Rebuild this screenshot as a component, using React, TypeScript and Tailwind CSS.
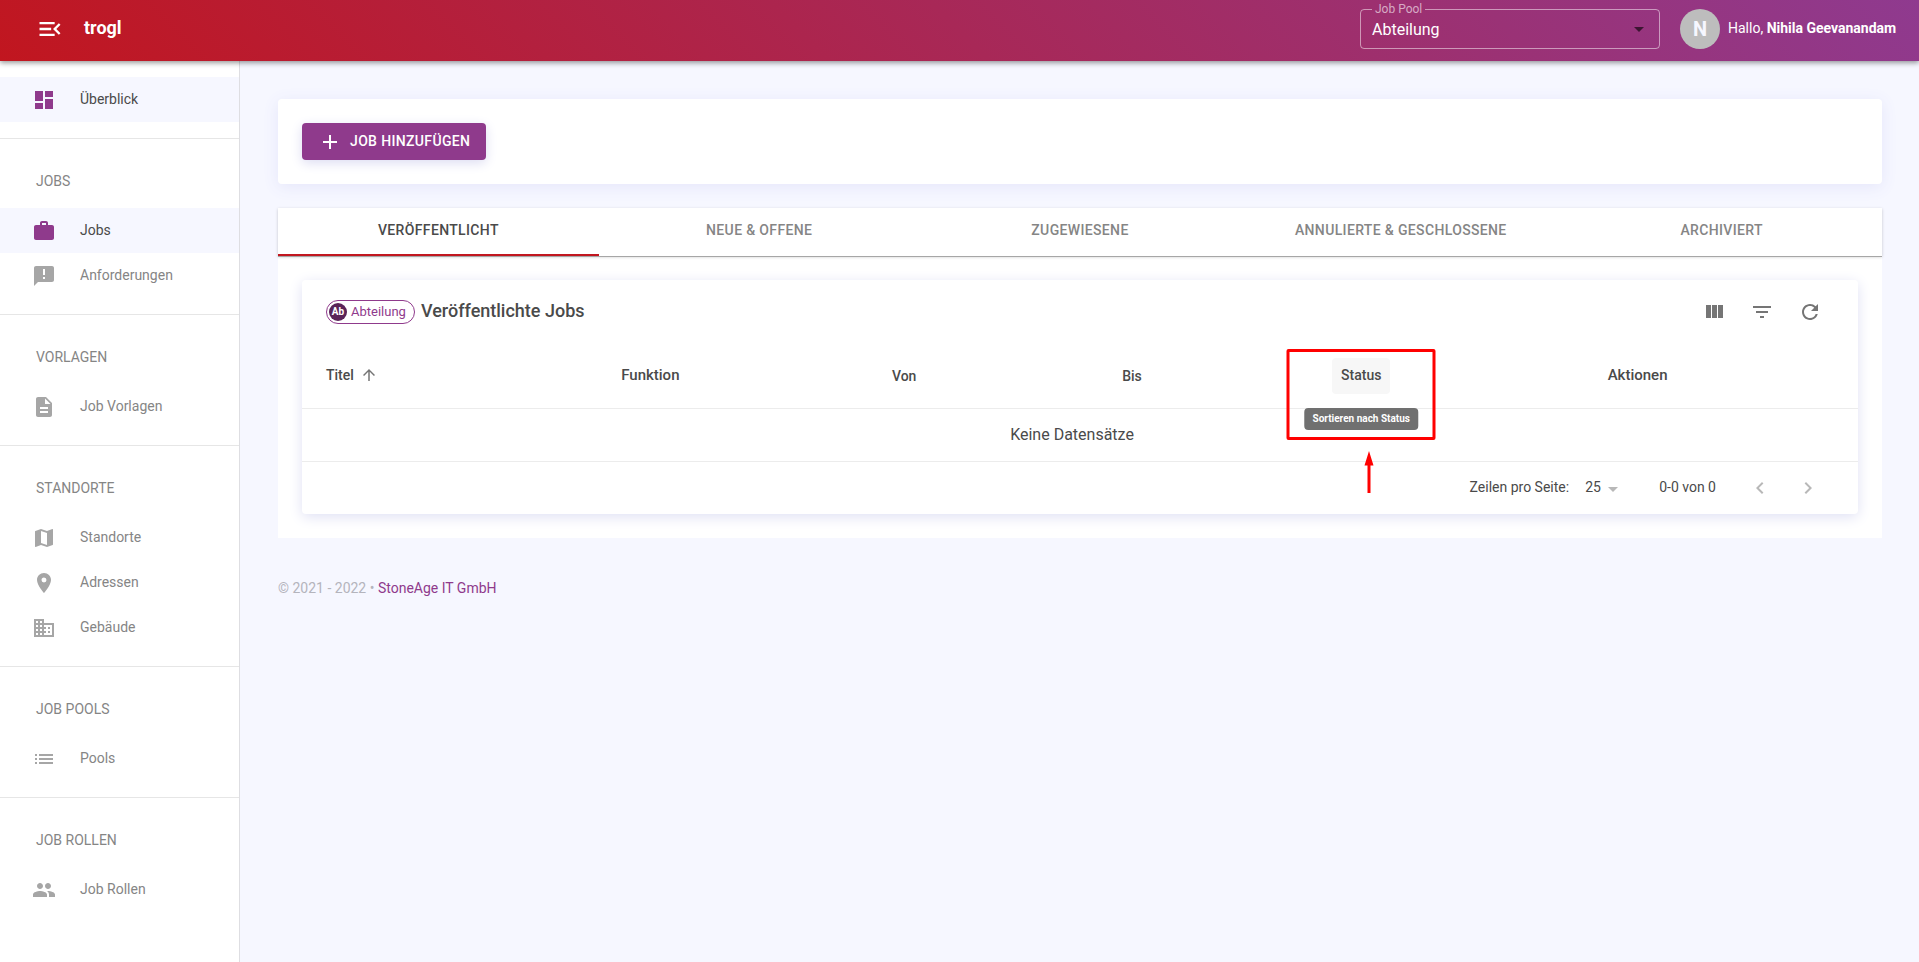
import { ReactNode } from "react";
import { IconType } from "react-icons";
import {
  MdAdd,
  MdAnnouncement,
  MdArrowDropDown,
  MdArrowUpward,
  MdBusiness,
  MdChevronLeft,
  MdChevronRight,
  MdDashboard,
  MdDescription,
  MdFilterList,
  MdList,
  MdMap,
  MdMenuOpen,
  MdPeople,
  MdPlace,
  MdRefresh,
  MdWork,
} from "react-icons/md";

// --- Types ---
interface NavItem {
  label: string;
  icon: IconType;
  active?: boolean;
}

interface NavSection {
  title?: string;
  items: NavItem[];
}

const navSections: NavSection[] = [
  { items: [{ label: "Überblick", icon: MdDashboard, active: true }] },
  {
    title: "JOBS",
    items: [
      { label: "Jobs", icon: MdWork, active: true },
      { label: "Anforderungen", icon: MdAnnouncement },
    ],
  },
  { title: "VORLAGEN", items: [{ label: "Job Vorlagen", icon: MdDescription }] },
  {
    title: "STANDORTE",
    items: [
      { label: "Standorte", icon: MdMap },
      { label: "Adressen", icon: MdPlace },
      { label: "Gebäude", icon: MdBusiness },
    ],
  },
  { title: "JOB POOLS", items: [{ label: "Pools", icon: MdList }] },
  { title: "JOB ROLLEN", items: [{ label: "Job Rollen", icon: MdPeople }] },
];

const tabs = [
  "VERÖFFENTLICHT",
  "NEUE & OFFENE",
  "ZUGEWIESENE",
  "ANNULIERTE & GESCHLOSSENE",
  "ARCHIVIERT",
];

export default function App() {
  return (
    <div className="flex min-h-screen flex-col bg-[#f6f7ff] font-['Roboto',sans-serif] text-sm text-[#4a4a4a]">
      <Header />
      <div className="flex flex-1">
        <Sidebar />
        <main className="min-w-0 flex-1 pt-[38px] pr-[37px] pl-[38px]">
          <div className="rounded bg-white p-6 shadow-[0_3px_16px_0_#e5e6fa]">
            <button className="flex h-[37px] items-center gap-2 rounded bg-[#8f3a8c] px-4 font-medium tracking-wide text-white shadow-[0_3px_12px_0_#dcdcf2]">
              <span className="flex w-6 justify-center">
                <MdAdd className="size-6" />
              </span>
              <span className="pb-0.5">JOB HINZUFÜGEN</span>
            </button>
          </div>

          <section className="mt-6 bg-white">
            <TabBar />
            <div className="p-6">
              <JobsCard />
            </div>
          </section>

          <footer className="mt-10 text-[#b4b4bc]">
            © 2021 - 2022 •{" "}
            <a href="#" className="text-[#8f3a8c]">
              StoneAge IT GmbH
            </a>
          </footer>
        </main>
      </div>
    </div>
  );
}

// --- Header ---
function Header() {
  return (
    <header className="relative z-10 flex h-[61px] items-end justify-between bg-[linear-gradient(45deg,#c1161f,#8f3a8f)] pr-[19px] pl-9 text-white shadow-[0_2px_5px_0_rgba(0,0,0,0.4)]">
      <div className="flex h-full items-center gap-5 pb-1">
        <button aria-label="Menü einklappen">
          <MdMenuOpen className="size-7" />
        </button>
        <span className="pb-0.5 text-lg font-bold">trogl</span>
      </div>

      <div className="flex items-end gap-5 pb-3">
        <fieldset className="relative w-[300px] rounded border border-white/50 px-[11px]">
          <legend className="h-4 px-[3px] text-xs leading-4 text-white/60">
            <label htmlFor="job-pool">Job Pool</label>
          </legend>
          <select
            id="job-pool"
            className="block h-[31px] w-full appearance-none bg-transparent pb-1.5 text-base outline-none"
          >
            <option>Abteilung</option>
          </select>
          <MdArrowDropDown className="pointer-events-none absolute right-2 bottom-[7px] size-6 text-black/60" />
        </fieldset>
        <div className="flex items-center gap-2">
          <span className="flex size-10 items-center justify-center rounded-full bg-[#bdbdbd] text-xl font-bold text-[#f6f7ff]">
            N
          </span>
          <span className="min-w-[172px] pb-0.5">
            Hallo, <b>Nihila Geevanandam</b>
          </span>
        </div>
      </div>
    </header>
  );
}

// --- Sidebar ---
function Sidebar() {
  return (
    <nav className="w-60 shrink-0 border-r border-[#dedee2] bg-white">
      {navSections.map((section, index) => (
        <div
          key={index}
          className="border-b border-[#e6e6e6] py-4 last:border-b-0"
        >
          {section.title && (
            <h2 className="flex h-[53px] items-center pb-0.5 pl-9 text-[#858585]">
              {section.title}
            </h2>
          )}
          <ul>
            {section.items.map((item) => (
              <NavLink key={item.label} item={item} />
            ))}
          </ul>
        </div>
      ))}
    </nav>
  );
}

function NavLink({ item }: { item: NavItem }) {
  const Icon = item.icon;
  return (
    <li>
      <a
        href="#"
        className={`flex h-[45px] items-center gap-6 pl-8 ${
          item.active ? "bg-[#f6f7ff] text-[#4a4a4a]" : "text-[#858585]"
        }`}
      >
        <Icon
          className={`size-6 ${item.active ? "text-[#8f3a8c]" : "text-[#a6a6a6]"}`}
        />
        <span className="pb-0.5">{item.label}</span>
      </a>
    </li>
  );
}

// --- Tabs ---
function TabBar() {
  return (
    <div
      role="tablist"
      className="grid grid-cols-5 shadow-[0_1px_0_0_#a6a6a6,0_1px_3px_0_rgba(0,0,0,0.2)]"
    >
      {tabs.map((tab, index) => (
        <button
          key={tab}
          role="tab"
          aria-selected={index === 0}
          className={`h-12 border-b-2 pb-0.5 font-medium tracking-wide ${
            index === 0
              ? "border-[#c1161f] text-[#4a4a4a]"
              : "border-transparent text-[#858585]"
          }`}
        >
          {tab}
        </button>
      ))}
    </div>
  );
}

// --- Jobs table ---
function JobsCard() {
  return (
    <div className="rounded bg-white shadow-[0_3px_14px_0_#dfe0f4]">
      <div className="flex h-16 items-center justify-between px-6">
        <div className="flex items-center gap-1.5">
          <span className="flex h-6 items-center gap-1 rounded-full border border-[#8f3a8c] pr-2 pl-0.5 text-[13px] text-[#8f3a8c]">
            <span className="flex size-[18px] items-center justify-center rounded-full bg-[#5a2358] text-[10px] font-bold text-white">
              Ab
            </span>
            Abteilung
          </span>
          <h1 className="pb-0.5 text-lg font-medium">Veröffentlichte Jobs</h1>
        </div>
        <div className="flex text-[#757575]">
          <ToolButton label="Spalten">
            <svg viewBox="0 0 24 24" fill="currentColor" className="size-6">
              <path d="M10 18h5V5h-5v13zm-6 0h5V5H4v13zM16 5v13h5V5h-5z" />
            </svg>
          </ToolButton>
          <ToolButton label="Filter">
            <MdFilterList className="size-6" />
          </ToolButton>
          <ToolButton label="Aktualisieren">
            <MdRefresh className="size-6" />
          </ToolButton>
        </div>
      </div>

      <table className="w-full table-fixed border-separate border-spacing-0 text-left">
        <thead>
          <tr className="h-[65px] *:border-b *:border-[#ececec] *:font-medium">
            <th className="w-[20%] pl-6">
              <button className="flex items-center gap-1.5 pb-0.5">
                Titel <MdArrowUpward className="size-[18px] text-[#757575]" />
              </button>
            </th>
            <th className="w-[17.4%] pl-2 text-[15px]">Funktion</th>
            <th className="w-[14.8%] pl-2">Von</th>
            <th className="w-[14%] pl-2">Bis</th>
            <th className="w-[17.2%]">
              <StatusHeader />
            </th>
            <th className="pl-2 text-[15px]">Aktionen</th>
          </tr>
        </thead>
        <tbody>
          <tr className="h-[53px]">
            <td
              colSpan={6}
              className="border-b border-[#ececec] pr-4 text-center text-base"
            >
              Keine Datensätze
            </td>
          </tr>
        </tbody>
      </table>

      <div className="flex h-[52px] items-center justify-end pr-[26px]">
        <label htmlFor="rows" className="pb-0.5">
          Zeilen pro Seite:
        </label>
        <div className="relative ml-4 pb-0.5">
          <select
            id="rows"
            defaultValue="25"
            className="block w-10 appearance-none bg-transparent outline-none"
          >
            <option>25</option>
          </select>
          <MdArrowDropDown className="pointer-events-none absolute top-0 right-0 size-6 text-[#b8b8b8]" />
        </div>
        <span className="ml-[34px] pb-0.5">0-0 von 0</span>
        <div className="ml-5 flex text-[#b8b8b8]">
          <ToolButton label="Vorherige Seite">
            <MdChevronLeft className="size-6" />
          </ToolButton>
          <ToolButton label="Nächste Seite">
            <MdChevronRight className="size-6" />
          </ToolButton>
        </div>
      </div>
    </div>
  );
}

function ToolButton({ label, children }: { label: string; children: ReactNode }) {
  return (
    <button aria-label={label} className="flex size-12 items-center justify-center">
      {children}
    </button>
  );
}

// Sort button with its tooltip and the red callout around both
function StatusHeader() {
  return (
    <div className="relative w-fit">
      <button className="block h-9 rounded bg-[#f7f7f7] px-[9px] pb-0.5">
        Status
      </button>
      <span
        role="tooltip"
        className="absolute top-[50px] left-1/2 flex h-[22px] -translate-x-1/2 items-center rounded bg-[#707070] px-2 text-[10px] font-bold whitespace-nowrap text-white"
      >
        Sortieren nach Status
      </span>
      <span className="pointer-events-none absolute -top-[9px] left-1/2 h-[91px] w-[149px] -translate-x-1/2 rounded-xs border-3 border-[#ff0000]" />
      <svg
        viewBox="0 0 10 42"
        className="pointer-events-none absolute top-[93px] left-8 h-[42px] w-2.5"
        fill="#ff0000"
      >
        <path d="M5 0 9.500 14.500H6.500V42H3.500V14.500H.5z" />
      </svg>
    </div>
  );
}
